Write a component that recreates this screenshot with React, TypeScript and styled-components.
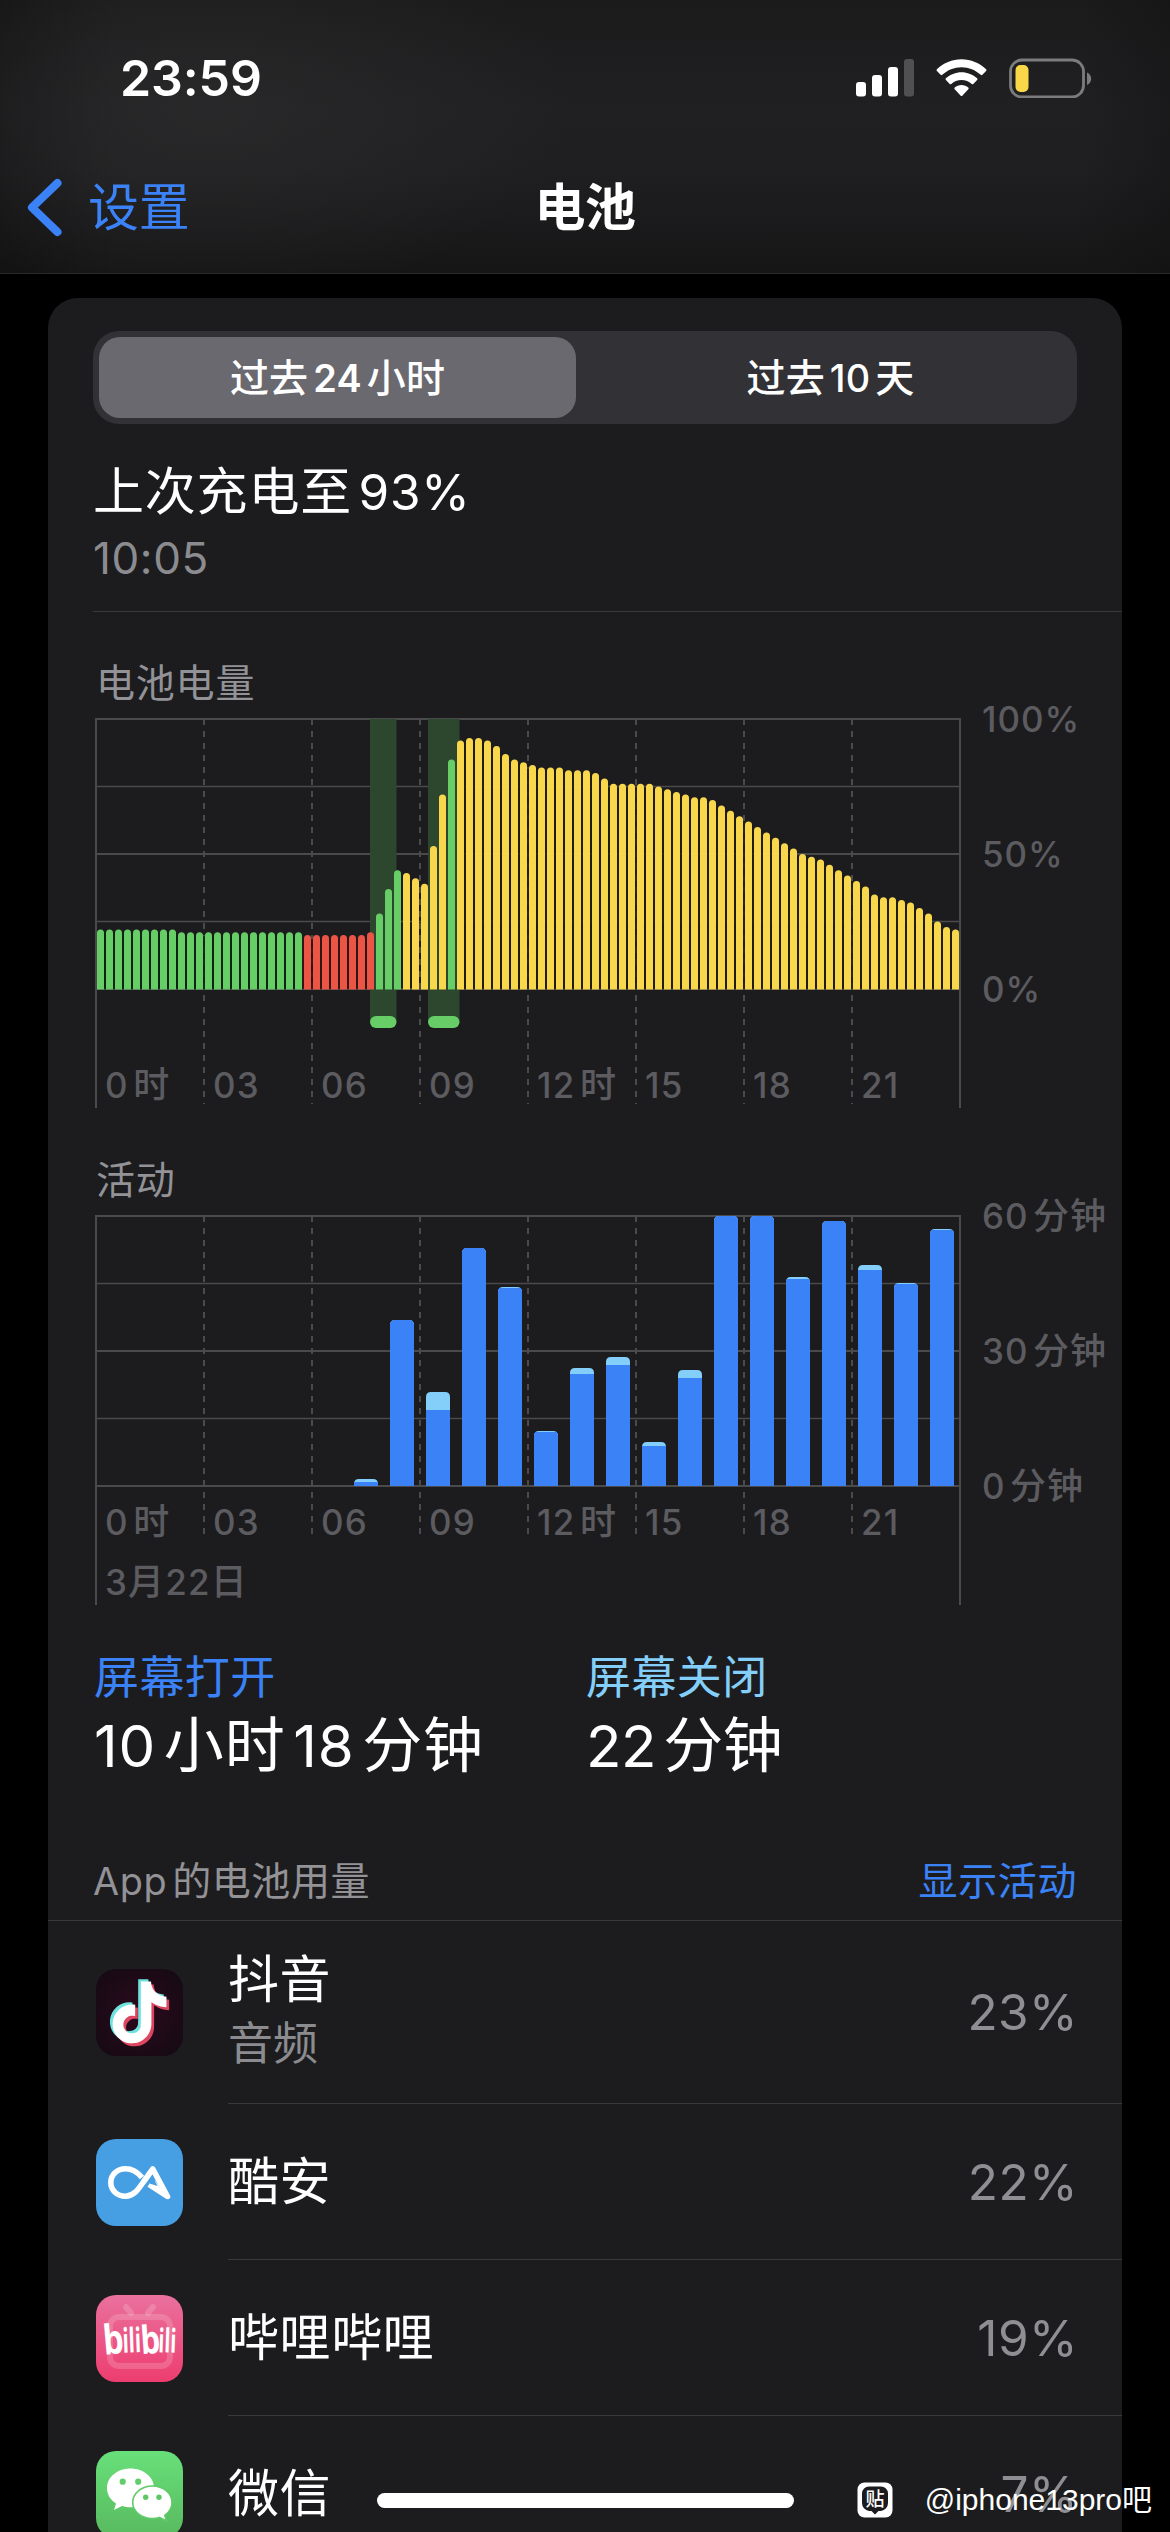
import React from 'react';
import styled, { createGlobalStyle } from 'styled-components';

const BLUE = '#3a82f6';
const SKY = '#84cffa';
const GREEN = '#67ce67';
const YELLOW = '#f8d74d';
const RED = '#eb5545';
const GRID = '#4a4a4c';
const SEPARATOR = '#39393c';

const GlobalStyle = createGlobalStyle`
  * { box-sizing: border-box; }
  body {
    margin: 0;
    background: #000;
    color: #fff;
    font-family: Inter, "Noto Sans CJK SC", sans-serif;
    font-kerning: normal;
  }
`;

const Screen = styled.main`
  position: relative;
  width: 1170px;
  height: 2532px;
  overflow: hidden;
  background: #000;
`;

const Header = styled.header`
  height: 274px;
  border-bottom: 1px solid #2a2a2b;
  background:
    radial-gradient(ellipse 360px 190px at 210px 110px, rgba(46, 46, 47, 0.6), rgba(46, 46, 47, 0) 100%),
    linear-gradient(90deg, rgba(14, 14, 15, 0.45), rgba(14, 14, 15, 0) 10%, rgba(14, 14, 15, 0) 92%, rgba(14, 14, 15, 0.35)),
    linear-gradient(180deg, #1b1b1c 0%, #202022 40%, #1f1f21 62%, #161617 100%);
`;

const StatusBar = styled.div`
  display: flex;
  align-items: center;
  justify-content: space-between;
  height: 155px;
  padding: 0 77px 0 120px;
`;

const Clock = styled.time`
  font-size: 50px;
  font-weight: 600;
  line-height: 60px;
  letter-spacing: -0.1px;
`;

const StatusIcons = styled.div`
  display: flex;
  align-items: center;
`;

const NavBar = styled.nav`
  display: grid;
  grid-template-columns: 1fr auto 1fr;
  align-items: center;
  height: 106px;
  padding: 0 26px;
`;

const BackButton = styled.button`
  display: flex;
  align-items: center;
  gap: 26px;
  padding: 0;
  border: 0;
  background: none;
  color: ${BLUE};
  font: inherit;
  font-size: 51px;
  line-height: 60px;
  letter-spacing: -0.3px;
`;

const NavTitle = styled.h1`
  margin: 0;
  font-size: 51px;
  font-weight: 600;
  line-height: 60px;
  letter-spacing: -0.6px;
`;

const Card = styled.section`
  margin: 24px 48px 0;
  padding-top: 33px;
  height: 2300px;
  border-radius: 30px 30px 0 0;
  background: #1c1c1e;
`;

const Segmented = styled.div`
  display: flex;
  height: 93px;
  margin: 0 45px;
  padding: 6px;
  border-radius: 26px;
  background: #313136;
`;

const Segment = styled.button<{ $active?: boolean }>`
  flex: ${(p) => (p.$active ? '0 0 477px' : '1')};
  padding: ${(p) => (p.$active ? '0' : '0 0 0 14px')};
  border: 0;
  border-radius: 21px;
  background: ${(p) => (p.$active ? '#6a696f' : 'transparent')};
  color: #fff;
  font: inherit;
  font-size: 39px;
  font-weight: 500;
  line-height: 48px;
  letter-spacing: 0.2px;

  span {
    font-weight: ${(p) => (p.$active ? 600 : 500)};
  }
`;

const Num = styled.span<{ $lead?: boolean; $tight?: boolean }>`
  margin: ${(p) => (p.$tight ? '0' : p.$lead ? '0 0.13em 0 0' : '0 0.13em')};
  font-size: 0.97em;
`;

const ChargeInfo = styled.div`
  margin-left: 45px;
  padding: 38px 0 27px;
  border-bottom: 1px solid ${SEPARATOR};
`;

const ChargeTitle = styled.div`
  font-size: 51px;
  line-height: 60px;
  letter-spacing: 0.8px;
`;

const ChargeTime = styled.div`
  margin-top: 10px;
  color: #8c8c90;
  font-size: 44px;
  line-height: 52px;
  letter-spacing: 0.6px;
`;

const ChartSection = styled.div`
  height: 497px;
  padding-left: 47px;
`;

const Charts = styled.div`
  height: 1039px;
  padding-top: 47px;
`;

const ChartTitle = styled.h2`
  margin: 0 0 11px 1px;
  color: #929297;
  font-size: 39px;
  font-weight: 400;
  line-height: 48px;
  letter-spacing: 0.8px;
`;

const ChartBody = styled.div`
  display: flex;
  gap: 20px;
`;

const Plot = styled.div`
  display: grid;
  width: 867px;
  height: 391px;
`;

const Canvas = styled.svg`
  grid-area: 1 / 1;
  display: block;
`;

const PlotLabels = styled.div<{ $offset: number }>`
  grid-area: 1 / 1;
  padding: ${(p) => p.$offset}px 0 0 1px;
  color: #5b5b60;
  font-size: 36px;
  font-weight: 500;
  line-height: 60px;
  letter-spacing: 1.2px;
`;

const HourRow = styled.div`
  display: grid;
  grid-template-columns: repeat(8, 108px);
`;

const HourLabel = styled.span`
  padding-left: 9px;
  white-space: nowrap;
`;

const AxisLabels = styled.div`
  display: flex;
  flex-direction: column;
  justify-content: space-between;
  height: 310px;
  margin-top: -19px;
  color: #5b5b60;
  font-size: 36px;
  font-weight: 500;
  line-height: 40px;
  letter-spacing: 1px;
  white-space: nowrap;
`;

const Stats = styled.div`
  display: grid;
  grid-template-columns: 492px 1fr;
  padding: 0 46px;
`;

const StatLabel = styled.div<{ $color: string }>`
  color: ${(p) => p.$color};
  font-size: 45px;
  line-height: 54px;
  letter-spacing: 0.4px;
`;

const StatValue = styled.div<{ $tracking: number }>`
  margin-top: 5px;
  font-size: 60px;
  line-height: 70px;
  letter-spacing: ${(p) => p.$tracking}px;
`;

const UsageHeader = styled.div`
  display: flex;
  justify-content: space-between;
  align-items: center;
  height: 140px;
  padding: 61px 45px 0 45px;
  border-bottom: 1px solid ${SEPARATOR};
  color: #929297;
  font-size: 39px;
  line-height: 48px;
  letter-spacing: 0.6px;
`;

const LinkButton = styled.button`
  padding: 0;
  border: 0;
  background: none;
  color: ${BLUE};
  font: inherit;
  letter-spacing: inherit;
`;

const AppRow = styled.div`
  display: flex;
  gap: 45px;
  padding-left: 48px;
`;

const IconCell = styled.div`
  display: flex;
  align-items: center;
`;

const AppIcon = styled.svg`
  display: block;
  width: 87px;
  height: 87px;
  border-radius: 20px;
`;

const AppContent = styled.div<{ $tall?: boolean }>`
  flex: 1;
  display: flex;
  align-items: center;
  justify-content: space-between;
  height: ${(p) => (p.$tall ? 183 : 156)}px;
  padding-right: 44px;
  border-bottom: 1px solid ${SEPARATOR};
`;

const AppName = styled.div`
  font-size: 51px;
  line-height: 60px;
  letter-spacing: 0.6px;
`;

const AppNote = styled.div`
  margin: 8px 0 4px;
  color: #8c8c90;
  font-size: 45px;
  line-height: 52px;
`;

const Percent = styled.div`
  color: #8e8e93;
  font-size: 49.5px;
  line-height: 60px;
  letter-spacing: 0.4px;
`;

const HomeIndicator = styled.div`
  position: absolute;
  left: 377px;
  bottom: 24px;
  width: 417px;
  height: 15px;
  border-radius: 8px;
  background: #fff;
`;

const Watermark = styled.div`
  position: absolute;
  right: 18px;
  bottom: 12px;
  display: flex;
  align-items: center;
  gap: 32px;
  font-family: "Liberation Sans", "Noto Sans CJK SC", sans-serif;
  font-size: 30px;
  line-height: 40px;
  white-space: nowrap;
`;

const SignalIcon = () => (
  <svg width="58" height="38" viewBox="0 0 58 38">
    <rect x="0" y="23" width="10" height="14.5" rx="3" fill="#fff" />
    <rect x="16" y="16" width="10" height="21.5" rx="3" fill="#fff" />
    <rect x="32" y="8" width="10" height="29.5" rx="3" fill="#fff" />
    <rect x="48" y="0" width="10" height="37.5" rx="3" fill="#505052" />
  </svg>
);

const WifiSvg = styled.svg`
  margin-left: 22px;
`;

const BatterySvg = styled.svg`
  margin-left: 22px;
`;

const WifiIcon = () => (
  <WifiSvg width="51" height="38" viewBox="0 0 51 38" fill="#fff">
    <path d="M25.5 0.3c9.3 0 18 3.700 24.600 9.900c.5.5.5 1.200 0 1.700l-3.700 3.900c-.5.5-1.200.5-1.700 0C39.500 11 32.800 8.200 25.500 8.200S11.500 11 6.300 15.800c-.5.5-1.200.5-1.700 0L.9 11.900c-.5-.5-.5-1.200 0-1.700C7.500 4 16.200.3 25.500.3z" />
    <path d="M25.500 13.200c5.900 0 11.400 2.300 15.600 6.100c.5.5.5 1.200 0 1.700l-3.800 3.900c-.4.5-1.200.5-1.600 0c-2.700-2.400-6.300-3.900-10.200-3.900s-7.500 1.500-10.200 3.900c-.4.5-1.200.5-1.600 0L9.900 21c-.5-.5-.5-1.200 0-1.700c4.200-3.800 9.700-6.100 15.600-6.100z" />
    <path d="M25.500 26c2.600 0 5 1 6.800 2.600c.5.500.5 1.200 0 1.700l-6 6.400c-.4.500-1.200.5-1.600 0l-6-6.400c-.5-.5-.5-1.200 0-1.700C20.500 27 22.900 26 25.500 26z" />
  </WifiSvg>
);

const BatteryIcon = () => (
  <BatterySvg width="84" height="40" viewBox="0 0 84 40">
    <rect x="1.5" y="2" width="73" height="37" rx="11.500" fill="none" stroke="#7c7c7e" strokeWidth="2.800" />
    <rect x="6.500" y="7" width="13" height="27" rx="5" fill="#fad749" />
    <path d="M78 14.500v12.500c2.500-1 4.200-3.400 4.200-6.200s-1.700-5.300-4.200-6.300z" fill="#7c7c7e" />
  </BatterySvg>
);

const BackChevron = () => (
  <svg width="36" height="60" viewBox="0 0 36 60" fill="none" stroke={BLUE} strokeWidth="8" strokeLinecap="round" strokeLinejoin="round">
    <path d="M31.500 5 6 29.500l25.500 24.500" />
  </svg>
);

const levels: number[] = [
  22, 22, 22, 22, 22, 22, 22, 22, 22, 21, 21, 21, 21, 21, 21, 21, 21, 21, 21, 21, 21, 21, 21,
  20, 20, 20, 20, 20, 20, 20, 21, 28, 37, 44, 43, 41, 39, 53, 72, 85, 92, 93, 93, 92, 90, 87, 85, 84,
  83, 82, 82, 82, 81, 81, 81, 80, 78, 76, 76, 76, 76, 76, 75, 74, 73, 72, 71, 71, 70, 68, 66, 64,
  62, 60, 58, 56, 54, 52, 50, 49, 48, 46, 44, 42, 40, 38, 35, 34, 34, 33, 32, 30, 28, 25, 23, 22,
];

const levelColor = (i: number) => {
  if (i < 23 || (i >= 31 && i <= 33) || i === 39) return GREEN;
  return i < 31 ? RED : YELLOW;
};

const gapColor = (i: number) => {
  if (i < 22) return '#0c2510';
  if (i < 30) return '#351411';
  return i < 40 ? 'none' : '#231c0b';
};

const activity: { hour: number; total: number; off: number }[] = [
  { hour: 7, total: 7, off: 3 },
  { hour: 8, total: 166, off: 0 },
  { hour: 9, total: 94, off: 18 },
  { hour: 10, total: 238, off: 0 },
  { hour: 11, total: 199, off: 1 },
  { hour: 12, total: 55, off: 1 },
  { hour: 13, total: 118, off: 6 },
  { hour: 14, total: 129, off: 8 },
  { hour: 15, total: 44, off: 4 },
  { hour: 16, total: 116, off: 8 },
  { hour: 17, total: 270, off: 0 },
  { hour: 18, total: 270, off: 0 },
  { hour: 19, total: 209, off: 2 },
  { hour: 20, total: 265, off: 0 },
  { hour: 21, total: 221, off: 5 },
  { hour: 22, total: 203, off: 1 },
  { hour: 23, total: 257, off: 1 },
];

const Grid = ({ dashEnd }: { dashEnd: number }) => (
  <g stroke={GRID} strokeWidth="2">
    {[0, 67.5, 135, 202.5, 270].map((y) => (
      <line key={y} x1="0" x2="865" y1={y + 1} y2={y + 1} strokeWidth={y % 135 ? 1.5 : 2} />
    ))}
    <line x1="1" x2="1" y1="0" y2="390" />
    <line x1="865" x2="865" y1="0" y2="390" />
    {[1, 2, 3, 4, 5, 6, 7].map((n) => (
      <line key={n} x1={n * 108 + 1} x2={n * 108 + 1} y1="1" y2={dashEnd} strokeDasharray="6 6" />
    ))}
  </g>
);

const LevelCanvas = () => (
  <Canvas width="867" height="391" viewBox="0 0 867 391">
    <Grid dashEnd={386} />
    {[{ x: 275, w: 26.5 }, { x: 333, w: 31.5 }].map((b) => (
      <g key={b.x}>
        <rect x={b.x} y="1" width={b.w} height="303" fill="#2c472e" />
        <rect x={b.x} y="298" width={b.w} height="12" rx="6" fill={GREEN} />
      </g>
    ))}
    {levels.map((v, i) => {
      const h = v * 2.7;
      const x = 2 + i * 9;
      const gap = Math.min(v, levels[i + 1] ?? 0) * 2.7 - 4;
      return (
        <g key={i}>
          {gap > 0 && <rect x={x + 7} y={271 - gap} width="2" height={gap} fill={gapColor(i)} opacity="0.85" />}
          <path d={`M${x} 271.500V${271 - h + 3.5}a3.500 3.500 0 0 1 7 0V271.500z`} fill={levelColor(i)} />
        </g>
      );
    })}
  </Canvas>
);

const ActivityCanvas = () => (
  <Canvas width="867" height="391" viewBox="0 0 867 391">
    <defs>
      {activity.map((a) => (
        <clipPath key={a.hour} id={`bar-${a.hour}`}>
          <path
            d={`M${7 + a.hour * 36} 271V${271 - a.total + Math.min(5, a.total)}q0 -${Math.min(5, a.total)} 5 -${Math.min(5, a.total)}h14q5 0 5 ${Math.min(5, a.total)}V271z`}
          />
        </clipPath>
      ))}
    </defs>
    <Grid dashEnd={325} />
    {activity.map((a) => (
      <g key={a.hour} clipPath={`url(#bar-${a.hour})`}>
        <rect x={7 + a.hour * 36} y={271 - a.total} width="24" height={a.total} fill={SKY} />
        <rect x={7 + a.hour * 36} y={271 - a.total + a.off} width="24" height={a.total - a.off} fill={BLUE} />
      </g>
    ))}
  </Canvas>
);

const Hours = () => (
  <HourRow>
    <HourLabel><Num $lead>0</Num>时</HourLabel>
    <HourLabel><Num $lead>03</Num></HourLabel>
    <HourLabel><Num $lead>06</Num></HourLabel>
    <HourLabel><Num $lead>09</Num></HourLabel>
    <HourLabel><Num $lead>12</Num>时</HourLabel>
    <HourLabel><Num $lead>15</Num></HourLabel>
    <HourLabel><Num $lead>18</Num></HourLabel>
    <HourLabel><Num $lead>21</Num></HourLabel>
  </HourRow>
);

const NOTE =
  'M12.525.02c1.31-.02 2.61-.01 3.91-.02.08 1.53.63 3.09 1.75 4.17 1.12 1.11 2.7 1.62 4.24 1.79v4.03c-1.44-.05-2.89-.35-4.2-.97-.57-.26-1.1-.59-1.62-.93-.01 2.92.01 5.84-.02 8.75-.08 1.4-.54 2.79-1.35 3.94-1.31 1.92-3.58 3.17-5.91 3.21-1.43.08-2.86-.31-4.08-1.03-2.02-1.19-3.44-3.37-3.65-5.71-.02-.5-.03-1-.01-1.49.18-1.9 1.12-3.72 2.58-4.96 1.66-1.44 3.98-2.13 6.15-1.72.02 1.48-.04 2.96-.04 4.44-.99-.32-2.15-.23-3.02.37-.63.41-1.11 1.04-1.36 1.75-.21.51-.15 1.07-.14 1.61.24 1.64 1.82 3.02 3.5 2.87 1.12-.01 2.19-.66 2.77-1.61.19-.33.4-.67.41-1.06.1-1.79.06-3.57.07-5.36.01-4.03-.01-8.05.02-12.07z';

const DouyinIcon = () => (
  <AppIcon viewBox="0 0 87 87">
    <defs>
      <radialGradient id="dy" cx="50%" cy="50%" r="65%">
        <stop offset="0" stopColor="#2c0a1d" />
        <stop offset="1" stopColor="#150a14" />
      </radialGradient>
    </defs>
    <rect width="87" height="87" fill="url(#dy)" />
    <g transform="translate(9.900 10.200) scale(2.580)"><path d={NOTE} fill="#6fe3df" /></g>
    <g transform="translate(15.300 15.400) scale(2.580)"><path d={NOTE} fill="#dc4660" /></g>
    <g transform="translate(12.600 12.400) scale(2.580)"><path d={NOTE} fill="#fff" /></g>
  </AppIcon>
);

const CoolapkIcon = () => (
  <AppIcon viewBox="0 0 87 87">
    <rect width="87" height="87" fill="#479fe3" />
    <g fill="none" stroke="#fff" strokeWidth="5.600" strokeLinejoin="round">
      <path d="M46 38.500C41.500 33 36 29.800 29.500 29.800C21 29.800 14.800 36 14.800 43.500S21 57.200 29.500 57.200C38 57.200 42.500 50 47 43.500L56.800 30L71.500 57.500L53 45.500" />
    </g>
    <path d="M53 44.500l6-3 12 17z" fill="#fff" />
    <path d="M52.500 44.300l4.300-6.300 4.800 9z" fill="#479fe3" />
  </AppIcon>
);

const LogoText = styled.text`
  fill: #fff;
  font-family: "Open Sans", "Noto Sans", sans-serif;
  font-weight: 700;
`;

const BilibiliIcon = () => (
  <AppIcon viewBox="0 0 87 87">
    <defs>
      <linearGradient id="bl" x1="0" y1="0" x2="0" y2="1">
        <stop offset="0" stopColor="#ea719d" />
        <stop offset="1" stopColor="#ed3d70" />
      </linearGradient>
    </defs>
    <rect width="87" height="87" fill="url(#bl)" />
    <g fill="none" stroke="#fff" strokeOpacity="0.17" strokeWidth="6" strokeLinecap="round">
      <rect x="14" y="22" width="60" height="49" rx="9" />
      <path d="M30 12l5 6M57 12l-5 6" />
    </g>
    <LogoText x="7" y="59" fontSize="41" textLength="20.500" lengthAdjust="spacingAndGlyphs" transform="rotate(-5 16 45)">b</LogoText>
    <LogoText x="26.500" y="57.500" fontSize="34" textLength="18.500" lengthAdjust="spacingAndGlyphs" transform="rotate(-2 35 45)">ili</LogoText>
    <LogoText x="44.500" y="58.500" fontSize="39" textLength="19.500" lengthAdjust="spacingAndGlyphs" transform="rotate(-4 55 45)">b</LogoText>
    <LogoText x="62.500" y="57.500" fontSize="33" textLength="18" lengthAdjust="spacingAndGlyphs" transform="rotate(2 72 45)">ili</LogoText>
  </AppIcon>
);

const WechatIcon = () => (
  <AppIcon viewBox="0 0 87 87">
    <defs>
      <linearGradient id="wx" x1="0" y1="0" x2="0" y2="1">
        <stop offset="0" stopColor="#68e07a" />
        <stop offset="1" stopColor="#58b95e" />
      </linearGradient>
    </defs>
    <rect width="87" height="87" fill="url(#wx)" />
    <path d="M34.500 17.500C21.500 17.500 11 26 11 37c0 6.500 3.500 12 9 15.500L18 59l8-4c3 1 5.500 1.300 8.500 1.300C47.500 56.300 58 48 58 37S47.500 17.500 34.500 17.500z" fill="#fff" />
    <circle cx="26.700" cy="30.700" r="3.100" fill="#61cd6c" />
    <circle cx="42.200" cy="30.700" r="3.100" fill="#61cd6c" />
    <path d="M56.300 35C67 35 76 42 76 51.500c0 5-2.800 9.700-7.200 12.800L70.500 70l-7-3.600c-2.300.8-4.700 1.200-7.200 1.200C45.500 67.600 36.700 60.500 36.700 51.500S45.500 35 56.300 35z" fill="#fff" stroke="#61ca6a" strokeWidth="1.600" />
    <circle cx="49.700" cy="46.300" r="2.700" fill="#5fc768" />
    <circle cx="63" cy="46.300" r="2.700" fill="#5fc768" />
  </AppIcon>
);

const TiebaIcon = () => (
  <svg width="36" height="36" viewBox="0 0 36 36">
    <rect x="0.500" y="0.500" width="35" height="35" rx="7" fill="#fff" />
    <path d="M12 4.500h12a7 7 0 0 1 7 7v9.500a8 8 0 0 1-7 8h-2.500L18 32.500 14.500 29H12a8 8 0 0 1-7-8v-9.500a7 7 0 0 1 7-7z" fill="#1c1c1e" />
    <text x="18" y="24" textAnchor="middle" fontFamily="'Noto Sans CJK SC', sans-serif" fontSize="19" fontWeight="500" fill="#fff">贴</text>
  </svg>
);

const apps = [
  { name: '抖音', note: '音频', percent: '23%', Icon: DouyinIcon },
  { name: '酷安', percent: '22%', Icon: CoolapkIcon },
  { name: '哔哩哔哩', percent: '19%', Icon: BilibiliIcon },
  { name: '微信', percent: '7%', Icon: WechatIcon },
];

export default function App() {
  return (
    <Screen>
      <GlobalStyle />
      <Header>
        <StatusBar>
          <Clock>23:59</Clock>
          <StatusIcons>
            <SignalIcon />
            <WifiIcon />
            <BatteryIcon />
          </StatusIcons>
        </StatusBar>
        <NavBar>
          <BackButton><BackChevron />设置</BackButton>
          <NavTitle>电池</NavTitle>
        </NavBar>
      </Header>

      <Card>
        <Segmented>
          <Segment $active>过去<Num>24</Num>小时</Segment>
          <Segment>过去<Num>10</Num>天</Segment>
        </Segmented>

        <ChargeInfo>
          <ChargeTitle>上次充电至<Num>93%</Num></ChargeTitle>
          <ChargeTime>10:05</ChargeTime>
        </ChargeInfo>

        <Charts>
          <ChartSection>
            <ChartTitle>电池电量</ChartTitle>
            <ChartBody>
              <Plot>
                <LevelCanvas />
                <PlotLabels $offset={337}><Hours /></PlotLabels>
              </Plot>
              <AxisLabels>
                <span><Num $lead>100%</Num></span>
                <span><Num $lead>50%</Num></span>
                <span><Num $lead>0%</Num></span>
              </AxisLabels>
            </ChartBody>
          </ChartSection>
          <ChartSection>
            <ChartTitle>活动</ChartTitle>
            <ChartBody>
              <Plot>
                <ActivityCanvas />
                <PlotLabels $offset={277}>
                  <Hours />
                  <HourLabel><Num $tight>3</Num>月<Num $tight>22</Num>日</HourLabel>
                </PlotLabels>
              </Plot>
              <AxisLabels>
                <span><Num $lead>60</Num>分钟</span>
                <span><Num $lead>30</Num>分钟</span>
                <span><Num $lead>0</Num>分钟</span>
              </AxisLabels>
            </ChartBody>
          </ChartSection>
        </Charts>

        <Stats>
          <div>
            <StatLabel $color={BLUE}>屏幕打开</StatLabel>
            <StatValue $tracking={0.9}><Num $lead>10</Num>小时<Num>18</Num>分钟</StatValue>
          </div>
          <div>
            <StatLabel $color={SKY}>屏幕关闭</StatLabel>
            <StatValue $tracking={-0.6}><Num $lead>22</Num>分钟</StatValue>
          </div>
        </Stats>

        <UsageHeader>
          <span><Num $lead>App</Num>的电池用量</span>
          <LinkButton>显示活动</LinkButton>
        </UsageHeader>

        {apps.map(({ name, note, percent, Icon }) => (
          <AppRow key={name}>
            <IconCell><Icon /></IconCell>
            <AppContent $tall={Boolean(note)}>
              <div>
                <AppName>{name}</AppName>
                {note && <AppNote>{note}</AppNote>}
              </div>
              <Percent>{percent}</Percent>
            </AppContent>
          </AppRow>
        ))}
      </Card>

      <HomeIndicator />
      <Watermark>
        <TiebaIcon />
        <span>@iphone13pro吧</span>
      </Watermark>
    </Screen>
  );
}
